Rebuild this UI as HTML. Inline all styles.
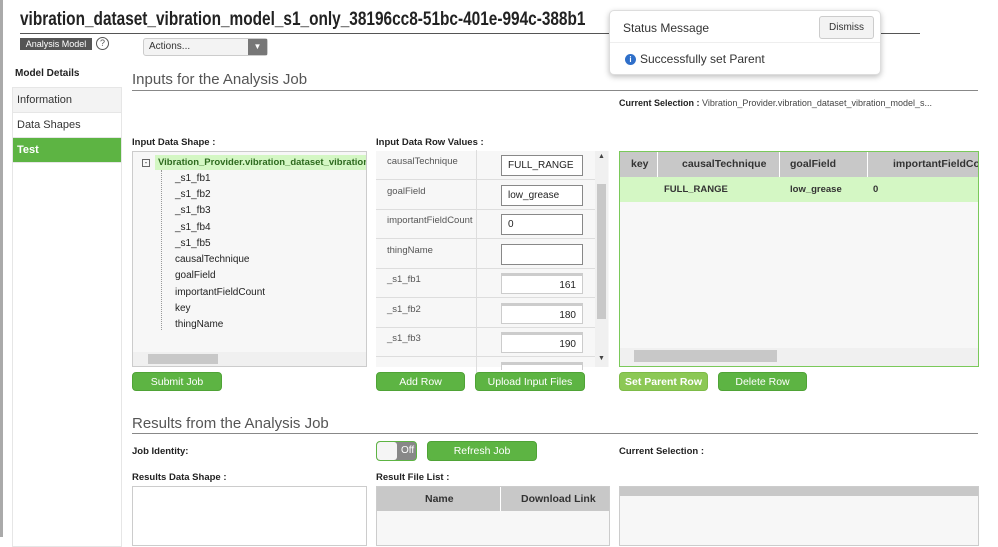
<!DOCTYPE html><html><head><style>
*{box-sizing:border-box;margin:0;padding:0}
body{width:998px;height:537px;overflow:hidden;background:#fff;font-family:"Liberation Sans",sans-serif;position:relative;color:#333}
.a{position:absolute}
.lbl{font-size:9.5px;font-weight:bold;color:#222}
.btn{position:absolute;height:19px;background:#5db443;color:#fff;border-radius:4px;font-size:10.5px;text-align:center;line-height:18px;border:1px solid #4fa336}
.sec{font-size:15px;color:#555}
.nav{position:absolute;left:13px;width:108px;height:25px;font-size:11px;line-height:25px;padding-left:4px;border-bottom:1px solid #e6e6e6}
.tr{position:absolute;left:175px;font-size:10px;color:#222}
.row{position:absolute;left:376px;width:219px;height:30px;border-bottom:1px solid #ddd}
.row span{position:absolute;left:11px;top:6px;font-size:9.5px;color:#555;white-space:nowrap}
.row i{position:absolute;left:100px;top:0;width:1px;height:30px;background:#ddd}
.row b{position:absolute;left:125px;top:5px;width:82px;height:21px;border:1px solid #888;background:#fff;font-weight:normal;font-size:10px;line-height:19px;padding:0 6px;color:#222}
.row b.n{border-color:#ccc;border-top:3px solid #ccc;text-align:right}
</style></head><body>
<div class="a" style="left:0;top:0;width:3px;height:537px;background:#aaa"></div>
<div class="a" style="left:20px;top:33px;width:900px;height:1px;background:#555"></div>
<div class="a" style="left:20px;top:9px;font-size:19px;font-weight:bold;color:#222;white-space:nowrap;transform:scaleX(0.81);transform-origin:0 0;line-height:22px">vibration_dataset_vibration_model_s1_only_38196cc8-51bc-401e-994c-388b1</div>
<div class="a" style="left:20px;top:38px;width:72px;height:12px;background:#555;color:#fff;font-size:9px;line-height:12px;text-align:center">Analysis Model</div>
<div class="a" style="left:96px;top:37px;width:13px;height:13px;border:1px solid #555;border-radius:50%;font-size:9px;text-align:center;line-height:11px;color:#555">?</div>
<div class="a" style="left:143px;top:38px;width:125px;height:18px;border:1px solid #ccc;border-radius:3px;background:#f3f3f3;font-size:10px;line-height:16px;padding-left:5px;color:#333">Actions...</div>
<div class="a" style="left:248px;top:39px;width:19px;height:16px;background:#777;color:#fff;font-size:8px;text-align:center;line-height:16px">▼</div>
<div class="a lbl" style="left:15px;top:68px;font-size:10px">Model Details</div>
<div class="a" style="left:12px;top:87px;width:110px;height:460px;border:1px solid #e6e6e6"></div>
<div class="nav" style="top:88px;background:#f3f3f3">Information</div>
<div class="nav" style="top:113px">Data Shapes</div>
<div class="nav" style="top:138px;background:#5db443;color:#fff;font-weight:bold">Test</div>

<div class="a sec" style="left:132px;top:71px">Inputs for the Analysis Job</div>
<div class="a" style="left:132px;top:90px;width:846px;height:1px;background:#888"></div>
<div class="a" style="left:619px;top:98px;font-size:9px;color:#444;white-space:nowrap"><b style="color:#222">Current Selection : </b> Vibration_Provider.vibration_dataset_vibration_model_s...</div>

<div class="a lbl" style="left:132px;top:137px">Input Data Shape :</div>
<div class="a" style="left:132px;top:151px;width:235px;height:216px;border:1px solid #ccc;background:#f7f7f7;overflow:hidden">
<div class="a" style="left:9px;top:7px;width:8px;height:8px;border:1px solid #666;font-size:8px;line-height:5px;text-align:center">-</div>
<div class="a" style="left:22px;top:3px;width:213px;height:15px;background:#d4f7c4;font-size:9.5px;font-weight:bold;color:#2d6a1e;line-height:15px;padding-left:3px;white-space:nowrap">Vibration_Provider.vibration_dataset_vibration_</div>
<div class="a" style="left:28px;top:18px;height:160px;border-left:1px dotted #999"></div>
<div class="a" style="left:0;bottom:0;width:233px;height:14px;background:#f0f0f0"></div>
<div class="a" style="left:15px;bottom:2px;width:70px;height:10px;background:#c8c8c8"></div>
</div>
<div class="tr" style="top:173px">_s1_fb1</div><div class="tr" style="top:189px">_s1_fb2</div><div class="tr" style="top:205px">_s1_fb3</div><div class="tr" style="top:222px">_s1_fb4</div><div class="tr" style="top:238px">_s1_fb5</div><div class="tr" style="top:254px">causalTechnique</div><div class="tr" style="top:270px">goalField</div><div class="tr" style="top:287px">importantFieldCount</div><div class="tr" style="top:303px">key</div><div class="tr" style="top:319px">thingName</div>

<div class="a lbl" style="left:376px;top:137px">Input Data Row Values :</div>
<div class="a" style="left:376px;top:151px;width:233px;height:216px;overflow:hidden;background:#f7f7f7"></div>
<div class="row" style="top:150px"><span>causalTechnique</span><i></i><b>FULL_RANGE</b></div>
<div class="row" style="top:180px"><span>goalField</span><i></i><b>low_grease</b></div>
<div class="row" style="top:209px"><span>importantFieldCount</span><i></i><b>0</b></div>
<div class="row" style="top:239px"><span>thingName</span><i></i><b></b></div>
<div class="row" style="top:268px"><span>_s1_fb1</span><i></i><b class="n">161</b></div>
<div class="row" style="top:298px"><span>_s1_fb2</span><i></i><b class="n">180</b></div>
<div class="row" style="top:327px"><span>_s1_fb3</span><i></i><b class="n">190</b></div>
<div class="row" style="top:357px;height:10px;border:none"><i></i><b class="n" style="height:8px;border-bottom:none"></b></div>
<div class="a" style="left:595px;top:151px;width:13px;height:216px;background:#f0f0f0"></div>
<div class="a" style="left:597px;top:184px;width:9px;height:135px;background:#c8c8c8"></div>
<div class="a" style="left:598px;top:153px;font-size:7px;color:#444">▲</div>
<div class="a" style="left:598px;top:355px;font-size:7px;color:#444">▼</div>

<div class="a" style="left:619px;top:151px;width:360px;height:216px;border:1px solid #7ac95a;background:#f7f7f7;overflow:hidden">
<div class="a" style="left:0;top:0;width:360px;height:25px;background:#c8c8c8;font-size:10.5px;font-weight:bold;color:#333;line-height:25px;white-space:nowrap">
<span class="a" style="left:11px">key</span><span class="a" style="left:37px;top:0;width:1px;height:25px;background:#fff"></span><span class="a" style="left:62px">causalTechnique</span><span class="a" style="left:159px;width:1px;height:25px;background:#fff"></span><span class="a" style="left:170px">goalField</span><span class="a" style="left:247px;width:1px;height:25px;background:#fff"></span><span class="a" style="left:273px">importantFieldCo</span></div>
<div class="a" style="left:0;top:25px;width:360px;height:25px;background:#d4f7c4;font-size:9.5px;font-weight:bold;color:#333;line-height:25px"><span class="a" style="left:44px">FULL_RANGE</span><span class="a" style="left:170px">low_grease</span><span class="a" style="left:253px">0</span></div>
<div class="a" style="left:0;top:196px;width:358px;height:18px;background:#f0f0f0"></div>
<div class="a" style="left:14px;top:198px;width:143px;height:12px;background:#c8c8c8"></div>
</div>

<div class="btn" style="left:132px;top:372px;width:90px">Submit Job</div>
<div class="btn" style="left:376px;top:372px;width:89px">Add Row</div>
<div class="btn" style="left:475px;top:372px;width:110px">Upload Input Files</div>
<div class="btn" style="left:619px;top:372px;width:89px;background:#8cc855;border-color:#7dbb47;font-weight:bold">Set Parent Row</div>
<div class="btn" style="left:718px;top:372px;width:89px">Delete Row</div>

<div class="a sec" style="left:132px;top:415px">Results from the Analysis Job</div>
<div class="a" style="left:132px;top:433px;width:846px;height:1px;background:#888"></div>
<div class="a lbl" style="left:132px;top:446px">Job Identity:</div>
<div class="a" style="left:376px;top:441px;width:41px;height:20px;border:1px solid #5db443;border-radius:4px;background:#888;overflow:hidden"><div class="a" style="left:0;top:0;width:20px;height:18px;background:#f5f5f5;border-radius:3px"></div><span class="a" style="left:24px;top:3px;font-size:10px;color:#fff">Off</span></div>
<div class="btn" style="left:427px;top:441px;width:110px;height:20px">Refresh Job</div>
<div class="a lbl" style="left:619px;top:446px">Current Selection :</div>
<div class="a lbl" style="left:132px;top:472px">Results Data Shape :</div>
<div class="a" style="left:132px;top:486px;width:235px;height:60px;border:1px solid #ccc"></div>
<div class="a lbl" style="left:376px;top:472px">Result File List :</div>
<div class="a" style="left:376px;top:486px;width:234px;height:60px;border:1px solid #ccc;background:#f7f7f7"><div class="a" style="left:0;top:0;width:232px;height:24px;background:#c8c8c8;font-size:10.5px;font-weight:bold;line-height:24px;color:#333"><span class="a" style="left:48px">Name</span><span class="a" style="left:123px;width:1px;height:24px;background:#fff"></span><span class="a" style="left:144px">Download Link</span></div></div>
<div class="a" style="left:619px;top:486px;width:360px;height:60px;border:1px solid #ccc;background:#f7f7f7"><div style="height:9px;background:#c8c8c8"></div></div>

<div class="a" style="left:609px;top:10px;width:272px;height:65px;background:#fff;border:1px solid #ddd;border-radius:5px;box-shadow:0 2px 6px rgba(0,0,0,.25)">
<div class="a" style="left:13px;top:10px;font-size:12px;color:#333">Status Message</div>
<div class="a" style="left:209px;top:5px;width:55px;height:23px;border:1px solid #ccc;border-radius:3px;background:#f3f3f3;font-size:10px;text-align:center;line-height:21px;color:#333">Dismiss</div>
<div class="a" style="left:0;top:31px;width:270px;height:1px;background:#eee"></div>
<div class="a" style="left:15px;top:43px;width:11px;height:11px;border-radius:50%;background:#2f6fc9;color:#fff;font-size:8px;font-weight:bold;text-align:center;line-height:11px">i</div>
<div class="a" style="left:30px;top:41px;font-size:12px;color:#333">Successfully set Parent</div>
</div>
</body></html>
